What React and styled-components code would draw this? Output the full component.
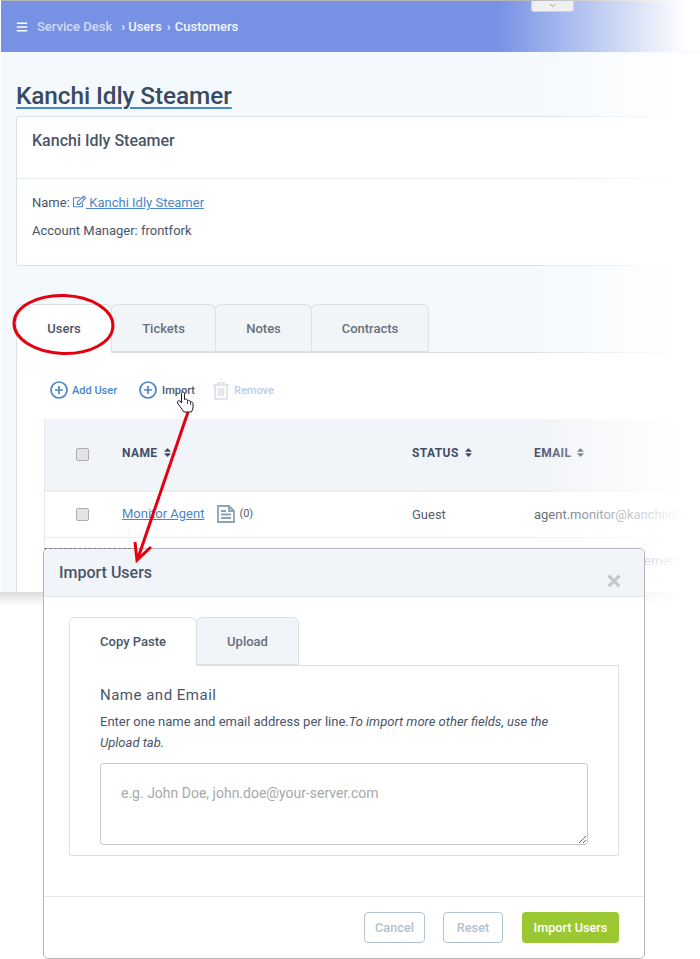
import React from "react";
import styled, { createGlobalStyle } from "styled-components";
import { FaBars, FaRegEdit, FaSort, FaTimes } from "react-icons/fa";
import { FiChevronDown } from "react-icons/fi";

const Global = createGlobalStyle`
  html, body { margin: 0; padding: 0; background: #fff; }
  body { font-family: Roboto, "Liberation Sans", sans-serif; color: #4a5568; }
`;

const Page = styled.div`
  position: relative;
  width: 700px;
  height: 959px;
  overflow: hidden;
  background: #fff;
`;

const Backdrop = styled.div`
  height: 592px;
  margin-left: 1px;
  background: #f4f9fd;
  overflow: hidden;
`;

const TopLine = styled.div`
  height: 1px;
  background: linear-gradient(90deg, #b5b5b5 75%, #fff 97%);
`;

const Header = styled.header`
  position: relative;
  height: 51px;
  background: linear-gradient(90deg, #7792e5 0, #7792e5 71%, #fff 98%);
  display: flex;
  align-items: center;
  padding-left: 15px;
  gap: 9px;
  color: #fff;
`;

const Crumbs = styled.div`
  display: flex;
  align-items: center;
  font-size: 13px;
  font-weight: 500;
  color: #f2f5ff;
`;

const CrumbRoot = styled.span`
  opacity: 0.72;
  margin-right: 7px;
`;

const CrumbSep = styled.span`
  margin: 0 ${(p) => p.$gap}px 0 2px;
`;

const Handle = styled.div`
  position: absolute;
  left: 530px;
  top: 0;
  width: 41px;
  height: 10px;
  background: #f0f0f2;
  border: 1px solid #d0d2d6;
  border-top: 0;
  border-radius: 0 0 3px 3px;
  display: flex;
  justify-content: center;
  color: #888;
  font-size: 9px;
`;

const Title = styled.h1`
  margin: 29px 0 5px 15px;
  font-size: 24.4px;
  line-height: 30px;
  font-weight: 500;
  color: #3b4a60;
  letter-spacing: -0.1px;
  text-decoration: underline;
  text-decoration-color: #4a86c8;
  text-decoration-thickness: 2px;
  text-underline-offset: 3px;
`;

const InfoCard = styled.section`
  margin-left: 15px;
  width: 700px;
  height: 150px;
  box-sizing: border-box;
  background: #fff;
  border: 1px solid #dde1e6;
  border-radius: 2px;
`;

const InfoHead = styled.div`
  height: 62px;
  padding: 15px 15px 0;
  box-sizing: border-box;
  font-size: 16px;
  font-weight: 500;
  line-height: 18px;
  color: #4a5568;
  border-bottom: 1px solid #e6e9ee;
`;

const InfoBody = styled.div`
  padding: 16px 15px 0;
  font-size: 13px;
  color: #4a5568;
  display: flex;
  flex-direction: column;
  gap: 13px;
  line-height: 15px;
`;

const NameLink = styled.a`
  color: #4a86c8;
  text-decoration: underline;
  svg { vertical-align: -1px; }
`;

const TabBar = styled.div`
  display: flex;
  margin: 38px 0 0 15px;
  height: 49px;
  box-sizing: border-box;
  border-bottom: 1px solid #dde1e6;
`;

const Tab = styled.div`
  width: ${(p) => p.$w}px;
  box-sizing: border-box;
  height: ${(p) => (p.$active ? 49 : 48)}px;
  padding-bottom: ${(p) => (p.$active ? 2 : 0)}px;
  display: flex;
  align-items: center;
  justify-content: center;
  font-size: 13px;
  font-weight: 500;
  color: ${(p) => (p.$active ? "#4a5568" : "#66707d")};
  background: ${(p) => (p.$active ? "#fff" : "#f2f5f8")};
  border: 1px solid #dde1e6;
  border-bottom: ${(p) => (p.$active ? "0" : "1px solid #dde1e6")};
  border-radius: 6px 6px 0 0;
  margin-right: -1px;
`;

const TabPanel = styled.div`
  margin-left: 15px;
  background: #fff;
  height: 243px;
  border-left: 1px solid #dde1e6;
  padding-top: 25px;
  box-sizing: border-box;
`;

const Toolbar = styled.div`
  display: flex;
  align-items: center;
  height: 24px;
  padding-left: 33px;
  font-size: 11px;
  font-weight: 500;
`;

const ToolItem = styled.div`
  display: flex;
  align-items: center;
  gap: ${(p) => p.$inner}px;
  margin-right: ${(p) => p.$gap}px;
  color: ${(p) => p.$color};
`;

const Table = styled.div`
  margin: 17px 0 0 27px;
  width: 700px;
  border-left: 1px solid #e6e9ee;
`;

const Row = styled.div`
  display: grid;
  grid-template-columns: 77px 290px 122px 1fr;
  align-items: center;
  box-sizing: border-box;
  height: ${(p) => p.$h}px;
  padding-bottom: ${(p) => (p.$head ? 4 : 0)}px;
  font-size: 13px;
  color: #55606e;
  background: ${(p) => (p.$head ? "#f1f4f8" : "#fff")};
  border-bottom: ${(p) => (p.$head ? "2px solid #eceef0" : "1px solid #eceef1")};
`;

const HeadCell = styled.div`
  display: flex;
  align-items: center;
  gap: 4px;
  font-size: 12px;
  font-weight: 700;
  letter-spacing: 0.4px;
  color: #434e66;
`;

const CheckCell = styled.div`
  padding-left: 31px;
  margin-top: ${(p) => (p.$head ? 4 : 0)}px;
  display: flex;
`;

const Check = styled.span`
  width: 11px;
  height: 11px;
  background: #e4e4e4;
  border: 1px solid #aeaeae;
  border-radius: 2px;
`;

const NameCell = styled.div`
  display: flex;
  align-items: center;
  margin-bottom: 2px;
`;

const AgentLink = styled.a`
  color: #4a86c8;
  text-decoration: underline;
  margin-right: 13px;
`;

const Count = styled.span`
  font-size: 11px;
  margin-left: 4px;
`;

const Fade = styled.div`
  position: absolute;
  top: 53px;
  right: 0;
  width: 170px;
  height: 553px;
  background: linear-gradient(90deg, rgba(255, 255, 255, 0), #fff 90%);
`;

const Tear = styled.div`
  height: 14px;
  background: linear-gradient(180deg, #dcdcdc, #efefef 50%, #fff);
`;

const Modal = styled.div`
  position: absolute;
  left: 43px;
  top: 548px;
  width: 602px;
  height: 411px;
  box-sizing: border-box;
  display: flex;
  flex-direction: column;
  background: #fff;
  border: 1px solid #b4b7ba;
  border-radius: 5px;
  &::before {
    content: "";
    position: absolute;
    left: 0;
    top: -1px;
    width: 92px;
    border-top: 1px dashed #7c7f84;
  }
`;

const ModalHead = styled.div`
  height: 48px;
  box-sizing: border-box;
  flex: none;
  display: flex;
  justify-content: space-between;
  padding: 14px 21px 0 15px;
  background: #f1f4f8;
  border-bottom: 1px solid #e3e6e9;
  border-radius: 5px 5px 0 0;
`;

const ModalTitle = styled.div`
  font-size: 16px;
  line-height: 20px;
  font-weight: 500;
  color: #4a5568;
`;

const CloseIcon = styled(FaTimes)`
  color: #c4c8cc;
  font-size: 18px;
  margin-top: 9px;
`;

const ModalBody = styled.div`
  padding: 20px 25px 0;
  flex: 1;
`;

const ModalTabs = styled.div`
  display: flex;
  height: 49px;
  box-sizing: border-box;
  border-bottom: 1px solid #dde1e6;
`;

const TabContent = styled.div`
  height: 190px;
  box-sizing: border-box;
  padding: 20px 30px 0;
  border: 1px solid #dde1e6;
  border-top: 0;
  border-radius: 0 0 2px 2px;
`;

const FieldTitle = styled.div`
  font-size: 15px;
  line-height: 18px;
  letter-spacing: 0.5px;
  color: #4a5568;
`;

const Help = styled.p`
  margin: 7px 0 10px;
  width: 470px;
  font-size: 13px;
  line-height: 21px;
  color: #4a5568;
`;

const Input = styled.textarea`
  display: block;
  width: 488px;
  height: 82px;
  box-sizing: border-box;
  padding: 20px;
  border: 1px solid #c6c8ca;
  border-radius: 3px;
  font-family: inherit;
  font-size: 14px;
  line-height: 18px;
  outline: none;
  &::placeholder { color: #a8a8a8; }
`;

const Footer = styled.div`
  height: 62px;
  flex: none;
  box-sizing: border-box;
  border-top: 1px solid #e8eaec;
  padding: 15px 25px 0 0;
  display: flex;
  justify-content: flex-end;
`;

const Button = styled.button`
  width: ${(p) => p.$w}px;
  height: 31px;
  margin-left: ${(p) => p.$gap}px;
  padding: 0;
  font-family: inherit;
  font-size: 12.7px;
  font-weight: 500;
  border-radius: 4px;
  color: ${(p) => (p.$primary ? "#fff" : "#b3bfcc")};
  background: ${(p) => (p.$primary ? "#9bc832" : "#fff")};
  border: ${(p) => (p.$primary ? "0" : "1px solid #b3c4d4")};
`;

const Annotation = styled.svg`
  position: absolute;
  left: 0;
  top: 0;
  pointer-events: none;
`;

const CirclePlus = ({ color }) => (
  <svg width="18" height="18" viewBox="0 0 18 18" fill="none" stroke={color} strokeWidth="1.7">
    <circle cx="9" cy="9" r="8" />
    <path d="M9 5v8M5 9h8" />
  </svg>
);

const TrashIcon = () => (
  <svg width="16" height="22" viewBox="0 0 16 22" fill="none" stroke="#d9dfe6" strokeWidth="1.6">
    <path d="M0 6h16M5 6V4h6v2M2 6v14h12V6M5.5 9v8M8 9v8M10.5 9v8" />
    <path d="M8 0v1" />
  </svg>
);

const DocIcon = () => (
  <svg width="18" height="18" viewBox="0 0 18 18" fill="none" stroke="#8ea2b4" strokeWidth="1.8">
    <path d="M1 1h11l5 5v11H1zM12 1v5h5" />
    <path d="M4 6h5M4 9.5h10M4 13h10" />
  </svg>
);

const rows = [
  { name: "Monitor Agent", status: "Guest", email: "agent.monitor@kanchiidly" },
  { name: "", status: "", email: "sales.agent.management@kanchi" },
];

export default function App() {
  return (
    <Page>
      <Global />
      <Backdrop>
        <TopLine />
        <Header>
          <FaBars size={12} />
          <Crumbs>
            <CrumbRoot>Service Desk</CrumbRoot>
            <CrumbSep $gap={3}>›</CrumbSep>Users
            <CrumbSep $gap={4}>&nbsp;›</CrumbSep>Customers
          </Crumbs>
          <Handle>
            <FiChevronDown />
          </Handle>
        </Header>
        <Title>Kanchi Idly Steamer</Title>
        <InfoCard>
          <InfoHead>Kanchi Idly Steamer</InfoHead>
          <InfoBody>
            <div>
              Name:{" "}
              <NameLink>
                <FaRegEdit size={13} /> Kanchi Idly Steamer
              </NameLink>
            </div>
            <div>Account Manager: frontfork</div>
          </InfoBody>
        </InfoCard>
        <TabBar>
          <Tab $w={96} $active>Users</Tab>
          <Tab $w={105}>Tickets</Tab>
          <Tab $w={97}>Notes</Tab>
          <Tab $w={118}>Contracts</Tab>
        </TabBar>
        <TabPanel>
          <Toolbar>
            <ToolItem $gap={22} $inner={4} $color="#4a86c8">
              <CirclePlus color="#4a86c8" /> Add User
            </ToolItem>
            <ToolItem $gap={18} $inner={5} $color="#4a5568">
              <CirclePlus color="#4a86c8" /> Import
            </ToolItem>
            <ToolItem $gap={0} $inner={5} $color="#b8cde6">
              <TrashIcon /> Remove
            </ToolItem>
          </Toolbar>
          <Table>
            <Row $head $h={73}>
              <CheckCell $head><Check /></CheckCell>
              <HeadCell>NAME <FaSort size={11} /></HeadCell>
              <HeadCell>STATUS <FaSort size={11} /></HeadCell>
              <HeadCell>EMAIL <FaSort size={11} /></HeadCell>
            </Row>
            {rows.map((r, i) => (
              <Row key={i} $h={46}>
                <CheckCell>{r.name && <Check />}</CheckCell>
                <NameCell>
                  {r.name && (
                    <>
                      <AgentLink>{r.name}</AgentLink>
                      <DocIcon />
                      <Count>(0)</Count>
                    </>
                  )}
                </NameCell>
                <div>{r.status}</div>
                <div>{r.email}</div>
              </Row>
            ))}
          </Table>
        </TabPanel>
      </Backdrop>
      <Tear />
      <Fade />
      <Modal>
        <ModalHead>
          <ModalTitle>Import Users</ModalTitle>
          <CloseIcon />
        </ModalHead>
        <ModalBody>
          <ModalTabs>
            <Tab $w={128} $active>Copy Paste</Tab>
            <Tab $w={103}>Upload</Tab>
          </ModalTabs>
          <TabContent>
            <FieldTitle>Name and Email</FieldTitle>
            <Help>
              Enter one name and email address per line.
              <em>To import more other fields, use the Upload tab.</em>
            </Help>
            <Input placeholder="e.g. John Doe, john.doe@your-server.com" />
          </TabContent>
        </ModalBody>
        <Footer>
          <Button $w={61}>Cancel</Button>
          <Button $w={60} $gap={18}>Reset</Button>
          <Button $w={97} $gap={19} $primary>Import Users</Button>
        </Footer>
      </Modal>
      <Annotation width="700" height="959" viewBox="0 0 700 959" fill="none">
        <ellipse cx="63.5" cy="324.5" rx="49.5" ry="29" stroke="#e4000f" strokeWidth="3" transform="rotate(2 63.5 324.5)" />
        <path d="M188 412L138 558" stroke="#e4000f" strokeWidth="3" />
        <path d="M135 542L137 560L151 547" stroke="#e4000f" strokeWidth="3" />
        <path
          d="M184 412L177.5 403C177 401 179 400 180 401L181.5 403V393.5C181.5 391.5 184.5 391.5 184.5 393.5V399.5C185.5 398.8 187.5 399 187.5 400.5C188.5 400 190.5 400.3 190.5 402C191.5 401.6 193 402.2 193 403.5V408L191.5 412Z"
          fill="#fff"
          stroke="#222"
          strokeWidth="1"
        />
        <path d="M187.5 400.5V404M190.5 402V405" stroke="#222" strokeWidth="0.8" />
      </Annotation>
    </Page>
  );
}
